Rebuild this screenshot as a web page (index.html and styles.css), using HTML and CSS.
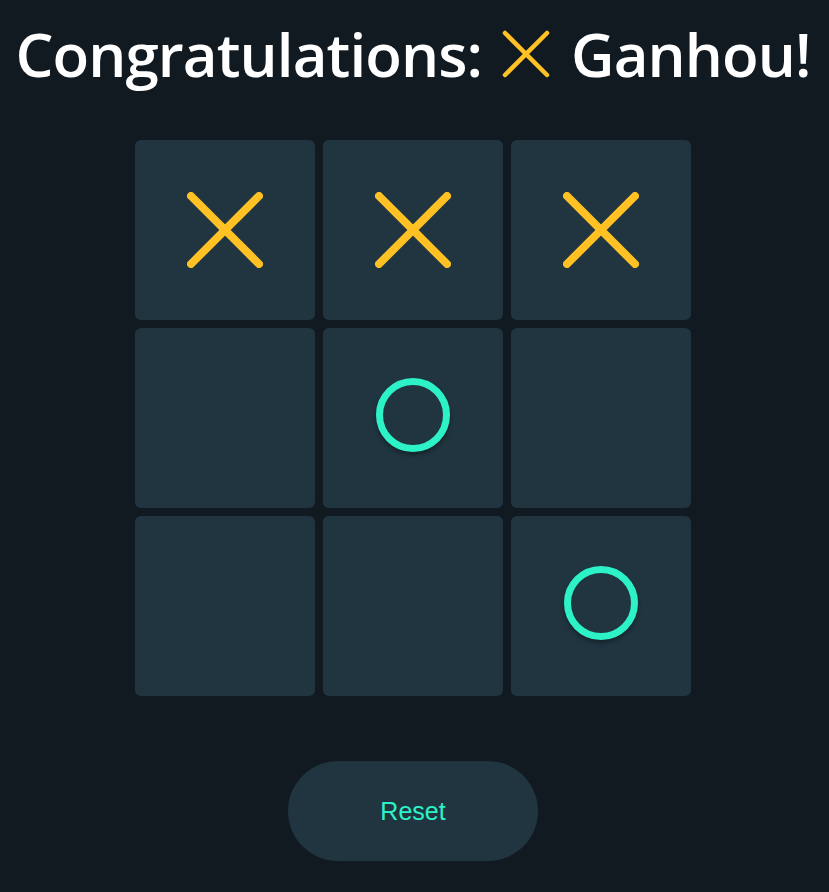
FILE: index.html
```html
<!DOCTYPE html>
<html>
<head>
<meta charset="utf-8">
<link rel="stylesheet" href="styles.css">
</head>
<body>
<div class="app">
  <h1 class="title">Congratulations: <svg class="title-x" width="48" height="48" viewBox="0 0 48 48"><line x1="3" y1="3" x2="45" y2="45"/><line x1="45" y1="3" x2="3" y2="45"/></svg> Ganhou!</h1>
  <div class="board">
    <div class="cell"><svg class="mark-x" width="76" height="76" viewBox="0 0 76 76"><line x1="4" y1="4" x2="72" y2="72"/><line x1="72" y1="4" x2="4" y2="72"/></svg></div>
    <div class="cell"><svg class="mark-x" width="76" height="76" viewBox="0 0 76 76"><line x1="4" y1="4" x2="72" y2="72"/><line x1="72" y1="4" x2="4" y2="72"/></svg></div>
    <div class="cell"><svg class="mark-x" width="76" height="76" viewBox="0 0 76 76"><line x1="4" y1="4" x2="72" y2="72"/><line x1="72" y1="4" x2="4" y2="72"/></svg></div>
    <div class="cell"></div>
    <div class="cell"><div class="mark-o"></div></div>
    <div class="cell"></div>
    <div class="cell"></div>
    <div class="cell"></div>
    <div class="cell"><div class="mark-o"></div></div>
  </div>
  <button class="reset">Reset</button>
</div>
</body>
</html>
```
FILE: styles.css
```css
html, body {
  margin: 0;
  padding: 0;
  background: #111a21;
}
.app {
  display: flex;
  flex-direction: column;
  align-items: center;
  padding-top: 14px;
  padding-right: 3px;
}
.title {
  margin: 0;
  font-family: "Open Sans", "Noto Sans", sans-serif;
  font-weight: 600;
  font-size: 60px;
  letter-spacing: -0.9px;
  line-height: 80px;
  color: #ffffff;
  white-space: nowrap;
  display: flex;
  align-items: center;
}
.title-x {
  margin: 0 21px 0 20px;
}
.title-x line {
  stroke: #ffc124;
  stroke-width: 4.5;
  stroke-linecap: round;
}
.board {
  margin-top: 46px;
  display: grid;
  grid-template-columns: repeat(3, 180px);
  grid-template-rows: repeat(3, 180px);
  gap: 8px;
}
.cell {
  background: #203540;
  border-radius: 6px;
  display: flex;
  align-items: center;
  justify-content: center;
}
.mark-x line {
  stroke: #ffc124;
  stroke-width: 8;
  stroke-linecap: round;
}
.mark-o {
  width: 60px;
  height: 60px;
  border: 7px solid #2ef2c7;
  border-radius: 50%;
  margin-bottom: 6px;
  box-shadow: 0 3px 4px rgba(0, 0, 0, 0.35);
}
.reset {
  margin-top: 65px;
  width: 250px;
  height: 100px;
  border: none;
  border-radius: 50px;
  background: #203540;
  color: #2ef2c7;
  font-family: "Liberation Sans", Arial, sans-serif;
  font-size: 25px;
}
```
